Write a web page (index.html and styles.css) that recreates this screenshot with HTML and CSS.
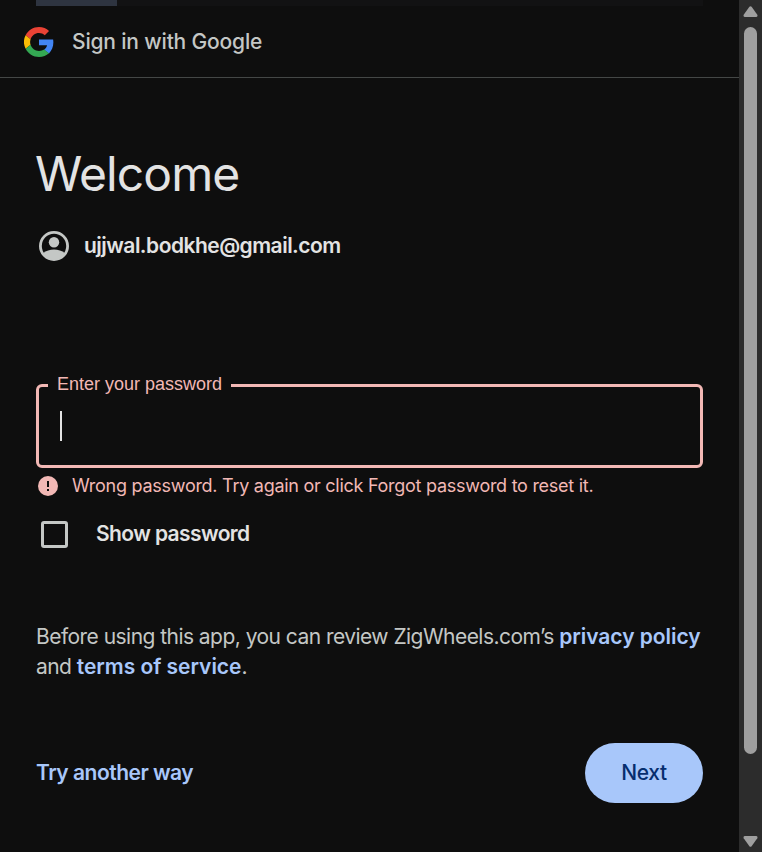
FILE: index.html
```html
<!DOCTYPE html>
<html lang="en">
<head>
<meta charset="utf-8">
<title>Sign in with Google</title>
<link rel="stylesheet" href="styles.css">
</head>
<body>
<div class="window">
  <main class="page">
    <div class="progress"><div class="progress-value"></div></div>
    <header class="header">
      <svg class="logo" viewBox="0 0 48 48">
        <path fill="#ea4335" d="M24 9.5c3.54 0 6.71 1.22 9.21 3.6l6.85-6.85C35.9 2.38 30.47 0 24 0 14.62 0 6.51 5.38 2.56 13.22l7.98 6.19C12.43 13.72 17.74 9.5 24 9.5z"/>
        <path fill="#4285f4" d="M46.98 24.55c0-1.57-.15-3.09-.38-4.55H24v9.02h12.94c-.58 2.96-2.26 5.48-4.78 7.18l7.73 6c4.51-4.18 7.09-10.36 7.09-17.65z"/>
        <path fill="#fbbc05" d="M10.53 28.59A14.5 14.5 0 0 1 10.53 19.41L2.55 13.22A24 24 0 0 0 2.56 34.78z"/>
        <path fill="#34a853" d="M24 48c6.48 0 11.93-2.13 15.89-5.81l-7.73-6c-2.15 1.45-4.92 2.3-8.16 2.3-6.26 0-11.57-4.22-13.47-9.91l-7.98 6.19C6.51 42.62 14.62 48 24 48z"/>
      </svg>
      <span class="header-title">Sign in with Google</span>
    </header>
    <div class="content">
      <h1 class="title">Welcome</h1>
      <div class="account">
        <svg class="avatar" viewBox="0 0 30 30">
          <circle cx="15" cy="15" r="13.6" fill="none" stroke="#c4c7c5" stroke-width="2.8"/>
          <circle cx="15" cy="11.2" r="5.2" fill="#c4c7c5"/>
          <path fill="#c4c7c5" d="M4 22.2C7 19.6 11 18.4 15 18.4s8 1.2 11 3.8C23.500 26.500 19.500 29 15 29S6.500 26.500 4 22.200z"/>
        </svg>
        <span class="email">ujjwal.bodkhe@gmail.com</span>
      </div>
      <div class="field">
        <span class="field-label">Enter your password</span>
        <span class="caret"></span>
      </div>
      <div class="error">
        <svg class="error-icon" viewBox="0 0 20 20"><circle cx="10" cy="10" r="10" fill="#f2b8b5"/><path fill="#0e0e0e" d="M9 5h2v6H9zM9 13h2v2H9z"/></svg>
        <span class="error-text">Wrong password. Try again or click Forgot password to reset it.</span>
      </div>
      <label class="show"><span class="checkbox"></span><span class="show-text">Show password</span></label>
      <p class="notice"><span class="line">Before using this app, you can review ZigWheels.com’s <a class="link">privacy policy</a></span><span class="line">and <a class="link">terms of service</a>.</span></p>
      <div class="actions"><a class="another">Try another way</a><button class="next">Next</button></div>
    </div>
  </main>
  <aside class="scrollbar">
    <svg class="arrow" viewBox="0 0 15 11"><path d="M6.400 .8Q7.500 -.5 8.600 .8L14.300 8.800Q15 11 13 11H2Q0 11 .7 8.800z" fill="#9f9f9f"/></svg>
    <div class="thumb"></div>
    <svg class="arrow arrow-down" viewBox="0 0 15 11"><path d="M6.400 10.200Q7.500 11.500 8.600 10.200L14.300 2.200Q15 0 13 0H2Q0 0 .7 2.200z" fill="#9f9f9f"/></svg>
  </aside>
</div>
</body>
</html>
```
FILE: styles.css
```css
* { box-sizing: border-box; }
body { margin: 0; background: #0e0e0e; font-family: Inter, "Liberation Sans", sans-serif; }
.window { display: flex; height: 852px; overflow: hidden; }
.page { width: 739px; color: #c4c7c5; }
.progress { height: 6px; margin: 0 36px; background: #121213; }
.progress-value { width: 81px; height: 6px; background: #2e3440; }
.header { display: flex; align-items: center; height: 72px; padding-left: 24px; border-bottom: 1px solid #444746; }
.logo { width: 30px; height: 30px; margin-right: 18px; }
.header-title { font-size: 21px; font-weight: 500; letter-spacing: -0.17px; white-space: nowrap; }
.content { padding: 64px 36px 0; }
.title { margin: 0 0 0 -1px; height: 60px; line-height: 63px; font-size: 48px; font-weight: 400; letter-spacing: -0.9px; color: #e3e3e3; }
.account { display: flex; align-items: center; height: 30px; margin: 29px 0 0 3px; }
.avatar { width: 30px; height: 30px; margin-right: 15px; }
.email { padding-bottom: 2px; font-size: 21px; font-weight: 600; letter-spacing: -0.52px; color: #e3e3e3; white-space: nowrap; }
.field { position: relative; height: 84px; margin-top: 123px; border: 3px solid #f2b8b5; border-radius: 6px; padding: 24px 0 0 21px; }
.field-label { position: absolute; left: 9px; top: -14px; width: 183px; padding-left: 9px; line-height: 22px; font-family: "Liberation Sans", Arial, sans-serif; font-size: 18px; background: #0e0e0e; color: #f2b8b5; white-space: nowrap; }
.caret { display: block; width: 2px; height: 30px; background: #e3e3e3; }
.error { display: flex; align-items: center; height: 24px; margin: 6px 0 0 2px; color: #f2b8b5; }
.error-icon { width: 20px; height: 20px; margin-right: 14px; }
.error-text { padding-bottom: 2px; font-size: 18px; letter-spacing: -0.27px; white-space: nowrap; }
.show { display: flex; align-items: center; height: 30px; margin: 21px 0 0 5px; }
.checkbox { width: 27px; height: 27px; margin-right: 28px; border: 3px solid #c4c7c5; border-radius: 3px; }
.show-text { padding-bottom: 2px; font-size: 21px; font-weight: 600; letter-spacing: -0.6px; color: #e3e3e3; }
.notice { margin: 73px 0 0; font-size: 21px; line-height: 30px; letter-spacing: -0.54px; }
.line { display: block; white-space: nowrap; }
.link { font-weight: 600; letter-spacing: -0.04px; color: #a8c7fa; }
.actions { display: flex; align-items: center; justify-content: space-between; height: 60px; margin-top: 61px; }
.another { padding-bottom: 2px; font-size: 21px; font-weight: 600; letter-spacing: -0.5px; color: #a8c7fa; }
.next { width: 118px; height: 60px; padding: 0 0 2px; border: 0; border-radius: 30px; background: #a8c7fa; color: #062e6f; font: 500 21px Inter, sans-serif; letter-spacing: -0.4px; }
.scrollbar { display: flex; flex-direction: column; align-items: center; width: 23px; padding: 6px 0 5px; background: #2c2c2c; }
.arrow { width: 15px; height: 11px; flex: none; }
.thumb { width: 13px; height: 727px; margin-top: 10px; border-radius: 7px; background: #9f9f9f; }
.arrow-down { margin-top: auto; }
```
